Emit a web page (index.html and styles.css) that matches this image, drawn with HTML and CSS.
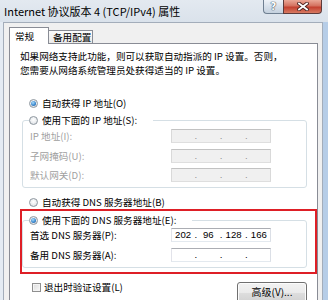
FILE: index.html
```html
<!DOCTYPE html>
<html lang="zh-CN">
<head>
<meta charset="utf-8">
<link rel="stylesheet" href="styles.css">
</head>
<body>
<div class="window">
  <div class="titlebar">
    <span class="title">Internet 协议版本 4 (TCP/IPv4) 属性</span>
    <div class="controls">
      <span class="btn-help">?</span>
      <span class="btn-close">
        <svg width="12" height="9" viewBox="0 0 12 9">
          <path d="M2 1.5 L10 7.5 M10 1.5 L2 7.5" stroke="#4a2320" stroke-width="3.6" stroke-linecap="square" fill="none"/>
          <path d="M2 1.5 L10 7.5 M10 1.5 L2 7.5" stroke="#ffffff" stroke-width="1.8" stroke-linecap="square" fill="none"/>
        </svg>
      </span>
    </div>
  </div>
  <div class="frame">
    <div class="client">
      <div class="tabs">
        <div class="tab active">常规</div>
        <div class="tab">备用配置</div>
      </div>
      <div class="panel">
        <div class="desc">
          <div class="line">如果网络支持此功能，则可以获取自动指派的 IP 设置。否则，</div>
          <div class="line">您需要从网络系统管理员处获得适当的 IP 设置。</div>
        </div>

        <div class="radio first"><span class="rb on"></span><span>自动获得 IP 地址(O)</span></div>

        <fieldset class="group g1">
          <legend><span class="radio"><span class="rb"></span><span>使用下面的 IP 地址(S):</span></span></legend>
          <div class="row dis"><span class="label">IP 地址(I):</span><span class="ip disabled"><span class="seg"></span><span class="dot">.</span><span class="seg"></span><span class="dot">.</span><span class="seg"></span><span class="dot">.</span><span class="seg"></span></span></div>
          <div class="row dis"><span class="label">子网掩码(U):</span><span class="ip disabled"><span class="seg"></span><span class="dot">.</span><span class="seg"></span><span class="dot">.</span><span class="seg"></span><span class="dot">.</span><span class="seg"></span></span></div>
          <div class="row dis"><span class="label">默认网关(D):</span><span class="ip disabled"><span class="seg"></span><span class="dot">.</span><span class="seg"></span><span class="dot">.</span><span class="seg"></span><span class="dot">.</span><span class="seg"></span></span></div>
        </fieldset>

        <div class="radio r3"><span class="rb"></span><span>自动获得 DNS 服务器地址(B)</span></div>

        <fieldset class="group g2">
          <legend><span class="radio"><span class="rb on"></span><span>使用下面的 DNS 服务器地址(E):</span></span></legend>
          <div class="row"><span class="label">首选 DNS 服务器(P):</span><span class="ip"><span class="seg">202</span><span class="dot">.</span><span class="seg">96</span><span class="dot">.</span><span class="seg">128</span><span class="dot">.</span><span class="seg">166</span></span></div>
          <div class="row r2"><span class="label">备用 DNS 服务器(A):</span><span class="ip"><span class="seg"></span><span class="dot">.</span><span class="seg"></span><span class="dot">.</span><span class="seg"></span><span class="dot">.</span><span class="seg"></span></span></div>
        </fieldset>

        <div class="footer">
          <div class="check"><span class="cb"></span><span>退出时验证设置(L)</span></div>
          <div class="button">高级(V)...</div>
        </div>

        <div class="highlight"></div>
      </div>
    </div>
  </div>
</div>
</body>
</html>
```

FILE: styles.css
```css
* { box-sizing: border-box; }

html, body {
  margin: 0;
  padding: 0;
}

body {
  width: 328px;
  height: 300px;
  overflow: hidden;
  background: #dfe6ee;
  font-family: "Noto Sans CJK SC", sans-serif;
  font-size: 9.6px;
  color: #000;
}

.window {
  display: flex;
  flex-direction: column;
  width: 328px;
  height: 300px;
}

.titlebar {
  height: 22px;
  display: flex;
  align-items: flex-start;
  background: linear-gradient(#e3e9f0, #dae2eb);
  flex: none;
}

.title {
  padding-left: 4px;
  font-size: 11px;
  line-height: 22px;
  color: #000;
  white-space: nowrap;
}

.controls {
  margin-left: auto;
  margin-right: 6px;
  display: flex;
}

.btn-help {
  width: 20px;
  height: 14px;
  border: 1px solid #6f7f91;
  border-top: none;
  border-right: none;
  border-radius: 0 0 0 4px;
  background: linear-gradient(#eef2f7, #d7e0ea 50%, #c5d1de);
  color: #ffffff;
  font-family: "DejaVu Sans", sans-serif;
  font-weight: bold;
  font-size: 10px;
  line-height: 13px;
  text-align: center;
  text-shadow: 0 0 1px #4d5866, 0 0 1px #4d5866, 0 0 1px #4d5866;
}

.btn-close {
  width: 39px;
  height: 14px;
  border: 1px solid #5d3b3b;
  border-top: none;
  border-radius: 0 0 4px 0;
  background: linear-gradient(#eaa796, #d4715f 45%, #c4402f 55%, #d77a62);
  display: flex;
  align-items: center;
  justify-content: center;
}

.frame {
  flex: 1;
  display: flex;
  background: linear-gradient(to right, #e4ebf3 0, #e4ebf3 322px, #b6cde7 322px);
}

.client {
  width: 320px;
  margin-left: 3px;
  background: #f0f0f0;
  border-left: 1px solid #a3adba;
  border-top: 1px solid #a3adba;
  border-right: 1px solid #a3adba;
  padding: 4px 4px 0 5px;
  display: flex;
  flex-direction: column;
}

.tabs {
  display: flex;
  align-items: flex-end;
  margin-bottom: -1px;
  position: relative;
  z-index: 1;
}

.tab {
  height: 13px;
  margin-bottom: 1px;
  padding-left: 4px;
  width: 44px;
  border: 1px solid #898c95;
  border-left: none;
  border-bottom: none;
  background: linear-gradient(#fbfbfb, #eaeaea);
  line-height: 13px;
  white-space: nowrap;
}

.tab.active {
  width: 40px;
  height: 17px;
  margin-bottom: 0;
  padding-left: 5px;
  border-left: 1px solid #898c95;
  border-right: 1px solid #898c95;
  background: #ffffff;
  line-height: 16px;
}

.panel {
  position: relative;
  flex: 1;
  background: #ffffff;
  border: 1px solid #898c95;
  padding: 5px 0 0 0;
  display: flex;
  flex-direction: column;
}

.desc {
  margin: 0 0 0 10px;
  display: flex;
  flex-direction: column;
}

.desc .line {
  height: 14px;
  line-height: 14px;
  white-space: nowrap;
}

.radio {
  display: flex;
  align-items: center;
  height: 14px;
  line-height: 14px;
  white-space: nowrap;
}

.radio.first { margin: 19px 0 0 19px; }
.radio.r3 { margin: 7px 0 0 19px; }

.rb {
  width: 9px;
  height: 9px;
  margin-right: 4px;
  border-radius: 50%;
  border: 1px solid #8e979f;
  background: radial-gradient(circle at 50% 40%, #ffffff 0, #eef0f2 45%, #d5d9de 100%);
  display: flex;
  align-items: center;
  justify-content: center;
  flex: none;
}

.rb.on::after {
  content: "";
  width: 5px;
  height: 5px;
  border-radius: 50%;
  background: radial-gradient(circle at 40% 35%, #a9dcfa 0, #3d8ad0 55%, #1a4f8c 100%);
}

.group {
  margin: 3px 10px 0 12px;
  padding: 2px 0 5px 7px;
  border: 1px solid #d5dfe5;
  border-radius: 3px;
  min-inline-size: 0;
  display: flex;
  flex-direction: column;
  gap: 5.5px;
}

.group.g2 {
  margin-top: 4px;
  padding-top: 1px;
  gap: 6px;
}

.group legend {
  padding: 0 16px 0 0;
  margin-left: -1px;
}

.row {
  display: flex;
  align-items: center;
  height: 14px;
  white-space: nowrap;
}

.row.dis .label { color: #a0a0a0; }

.label {
  width: 141px;
  flex: none;
}

.ip {
  width: 100px;
  height: 14px;
  display: flex;
  align-items: center;
  background: #ffffff;
  border: 1px solid;
  border-color: #abadb3 #dbdfe6 #e3e9ef #e2e3ea;
  font-family: "Liberation Sans", sans-serif;
  font-size: 9.6px;
  line-height: 12px;
}

.ip.disabled {
  background: #f0f0f0;
  border-color: #c2c2c2 #d9d9d9 #dedede #d9d9d9;
  color: #909090;
}

.seg {
  flex: 1;
  text-align: center;
}

.dot {
  width: 3px;
  text-align: center;
}

.footer {
  margin: 14px 10px 0 22px;
  display: flex;
  align-items: flex-start;
}

.check {
  display: flex;
  align-items: center;
  height: 10px;
  line-height: 10px;
  white-space: nowrap;
}

.cb {
  width: 9px;
  height: 9px;
  margin-right: 3px;
  border: 1px solid #8f8f8f;
  background: linear-gradient(135deg, #dcdcdc, #f8f8f8);
  box-shadow: inset 0 0 0 1px #f4f4f4;
  flex: none;
}

.button {
  margin-left: auto;
  width: 70px;
  height: 23px;
  border: 1px solid #707070;
  border-radius: 3px;
  background: linear-gradient(#f2f2f2, #ebebeb 45%, #dddddd 50%, #cfcfcf);
  box-shadow: inset 0 0 0 1px #fcfcfc;
  text-align: center;
  line-height: 18px;
  font-size: 10px;
  white-space: nowrap;
}

.highlight {
  position: absolute;
  left: 10px;
  top: 165px;
  width: 297px;
  height: 65px;
  border: 2px solid #de1f26;
  pointer-events: none;
}
```
